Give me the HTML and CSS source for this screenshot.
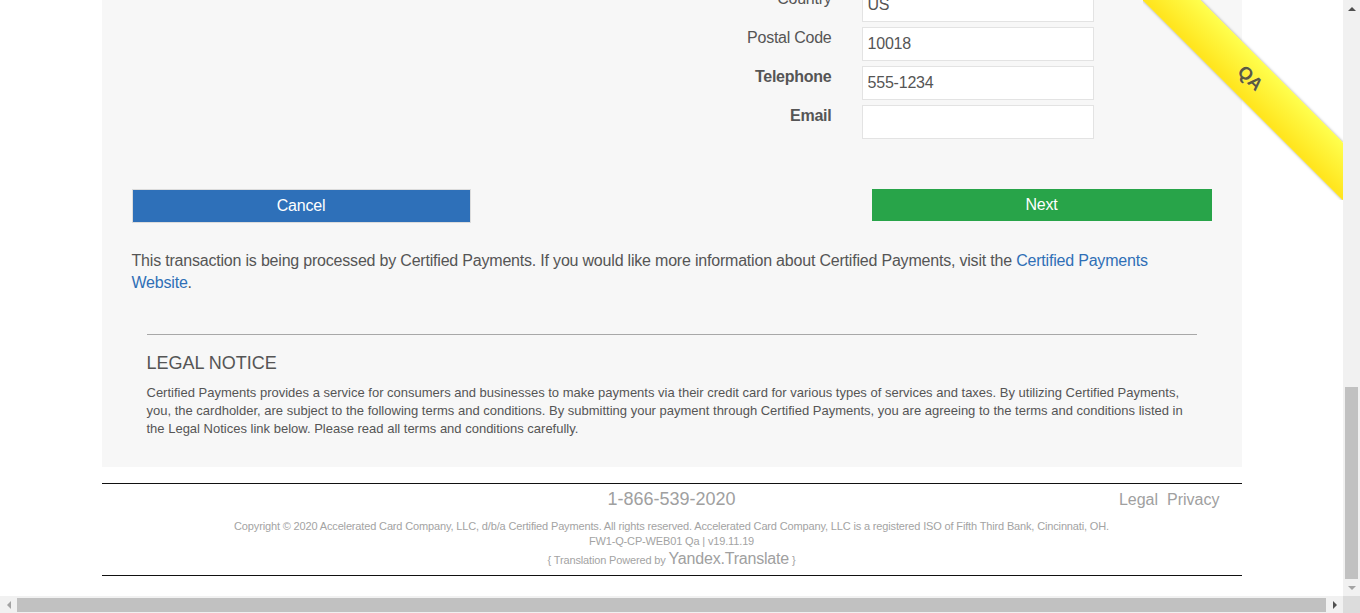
FILE: index.html
```html
<!DOCTYPE html>
<html lang="en">
<head>
<meta charset="utf-8">
<title>Certified Payments</title>
<link rel="stylesheet" href="styles.css">
</head>
<body>
<div class="screen">
  <div class="page">
    <main class="card">
      <form class="form">
        <label class="lbl">Country</label><input class="field" value="US">
        <label class="lbl">Postal Code</label><input class="field" value="10018">
        <label class="lbl lbl-req">Telephone</label><input class="field" value="555-1234">
        <label class="lbl lbl-req">Email</label><input class="field" value="">
      </form>
      <div class="actions">
        <button type="button" class="btn btn-cancel">Cancel</button>
        <button type="button" class="btn btn-next">Next</button>
      </div>
      <p class="info">This transaction is being processed by Certified Payments. If you would like more information about Certified Payments, visit the <a class="link" href="#">Certified Payments Website</a>.</p>
      <section class="legal">
        <hr class="rule">
        <h2 class="legal-title">LEGAL NOTICE</h2>
        <p class="legal-text">Certified Payments provides a service for consumers and businesses to make payments via their credit card for various types of services and taxes. By utilizing Certified Payments, you, the cardholder, are subject to the following terms and conditions. By submitting your payment through Certified Payments, you are agreeing to the terms and conditions listed in the Legal Notices link below. Please read all terms and conditions carefully.</p>
      </section>
    </main>
    <footer class="footer">
      <div class="foot-top">
        <span></span>
        <span class="phone">1-866-539-2020</span>
        <nav class="foot-links"><a href="#">Legal</a><a href="#">Privacy</a></nav>
      </div>
      <p class="meta">Copyright © 2020 Accelerated Card Company, LLC, d/b/a Certified Payments. All rights reserved. Accelerated Card Company, LLC is a registered ISO of Fifth Third Bank, Cincinnati, OH.</p>
      <p class="meta">FW1-Q-CP-WEB01 Qa | v19.11.19</p>
      <p class="meta meta-tr">{ Translation Powered by <span class="yandex">Yandex.Translate</span> }</p>
    </footer>
    <div class="ribbon-wrap"><div class="ribbon">QA</div></div>
  </div>
  <div class="vscroll">
    <span class="arrow arrow-up"></span>
    <span class="vtrack"><span class="vthumb"></span></span>
    <span class="arrow arrow-down"></span>
  </div>
  <div class="hscroll">
    <span class="arrow arrow-left"></span>
    <span class="hthumb"></span>
    <span class="arrow arrow-right"></span>
  </div>
  <div class="corner"></div>
</div>
</body>
</html>
```

FILE: styles.css
```css
* { box-sizing: border-box; }
html, body { margin: 0; padding: 0; }
body {
  background: #fff;
  font-family: "Liberation Sans", Arial, sans-serif;
  color: #555;
  overflow: hidden;
}
.screen {
  width: 1360px;
  height: 613px;
  display: grid;
  grid-template-columns: 1343px 17px;
  grid-template-rows: 596px 17px;
}
.page {
  position: relative;
  overflow: hidden;
  background: #fff;
}
.card {
  width: 1140px;
  margin: -12px auto 0;
  background: #f7f7f7;
  padding: 0 30px 29px;
}
.form {
  display: grid;
  grid-template-columns: 700px 232px;
  column-gap: 30px;
  row-gap: 5px;
  margin: 0;
}
.lbl {
  text-align: right;
  font-size: 16px;
  line-height: 18px;
  padding-top: 2px;
  color: #555;
  letter-spacing: -0.25px;
}
.lbl-req { font-weight: bold; }
.field {
  height: 34px;
  width: 232px;
  border: 1px solid #e3e3e3;
  background: #fff;
  padding: 0 5px;
  font-family: "Liberation Sans", Arial, sans-serif;
  font-size: 16px;
  color: #555;
  outline: none;
  letter-spacing: -0.2px;
}
.actions {
  display: flex;
  justify-content: space-between;
  align-items: flex-start;
  margin-top: 50px;
}
.btn {
  font-family: "Liberation Sans", Arial, sans-serif;
  font-size: 16px;
  color: #fff;
  cursor: pointer;
  padding: 0;
  letter-spacing: -0.2px;
}
.btn-cancel {
  width: 339px;
  height: 34px;
  background: #2e70b9;
  border: 1px solid #dcdcdc;
}
.btn-next {
  width: 340px;
  height: 32px;
  background: #28a449;
  border: 0;
}
.info {
  margin: 27px 0 0;
  font-size: 16px;
  line-height: 22px;
  color: #555;
  letter-spacing: -0.2px;
}
.link { color: #2f6fb6; text-decoration: none; }
.legal { padding: 0 15px; margin-top: 40px; }
.rule {
  margin: 0;
  border: 0;
  border-top: 1px solid #a8a8a8;
  height: 0;
}
.legal-title {
  margin: 18px 0 0;
  font-size: 18px;
  line-height: 20px;
  font-weight: normal;
  color: #555;
}
.legal-text {
  margin: 11px 0 0;
  font-size: 13px;
  line-height: 18px;
  color: #555;
  letter-spacing: 0;
}
.footer {
  width: 1140px;
  margin: 16px auto 0;
  border-top: 1px solid #111;
  border-bottom: 1px solid #111;
  padding: 4px 0 5px;
  text-align: center;
  color: #a3a3a3;
}
.foot-top {
  display: grid;
  grid-template-columns: 1fr auto 1fr;
  align-items: center;
}
.phone { font-size: 18px; line-height: 20px; color: #a0a0a0; }
.foot-links {
  display: flex;
  justify-content: flex-end;
  gap: 9px;
  padding-right: 22px;
  padding-top: 2px;
  font-size: 16px;
  line-height: 20px;
}
.foot-links a { color: #a0a0a0; text-decoration: none; }
.meta {
  margin: 0;
  font-size: 11px;
  line-height: 15px;
  color: #a3a3a3;
  letter-spacing: -0.15px;
}
.foot-top + .meta { margin-top: 9px; }
.meta-tr { line-height: 19px; }
.yandex { font-size: 16px; color: #a0a0a0; letter-spacing: -0.2px; }

.ribbon-wrap {
  position: absolute;
  top: 0;
  right: 0;
  width: 200px;
  height: 200px;
  overflow: hidden;
  pointer-events: none;
}
.ribbon {
  position: absolute;
  left: -93px;
  top: 58px;
  width: 400px;
  height: 41px;
  transform: rotate(45deg);
  background: linear-gradient(to bottom, #ffff4e, #ffe41c);
  box-shadow: 0 0 3px rgba(0, 0, 0, 0.35);
  text-align: center;
  font-family: "Liberation Sans", Arial, sans-serif;
  font-weight: bold;
  font-size: 18px;
  line-height: 41px;
  color: #5b5a3e;
  text-shadow: 0 0 1px rgba(255, 255, 255, 0.6);
}

.vscroll {
  background: #f1f1f1;
  display: flex;
  flex-direction: column;
  align-items: center;
}
.vtrack {
  flex: 1;
  width: 100%;
  display: flex;
  flex-direction: column;
  justify-content: flex-end;
  align-items: center;
}
.vthumb {
  width: 13px;
  height: 192px;
  background: #c1c1c1;
}
.hscroll {
  background: #f1f1f1;
  display: flex;
  align-items: center;
}
.hthumb {
  flex: 1;
  height: 14px;
  background: #c1c1c1;
}
.corner { background: #dcdcdc; }
.arrow {
  width: 17px;
  height: 17px;
  flex: none;
  display: flex;
  align-items: center;
  justify-content: center;
}
.arrow::before {
  content: "";
  width: 0;
  height: 0;
}
.arrow-up::before {
  border-left: 4px solid transparent;
  border-right: 4px solid transparent;
  border-bottom: 4px solid #505050;
}
.arrow-down::before {
  border-left: 4px solid transparent;
  border-right: 4px solid transparent;
  border-top: 4px solid #a3a3a3;
}
.arrow-left::before {
  border-top: 4px solid transparent;
  border-bottom: 4px solid transparent;
  border-right: 4px solid #a3a3a3;
}
.arrow-right::before {
  border-top: 4px solid transparent;
  border-bottom: 4px solid transparent;
  border-left: 4px solid #505050;
}
```
